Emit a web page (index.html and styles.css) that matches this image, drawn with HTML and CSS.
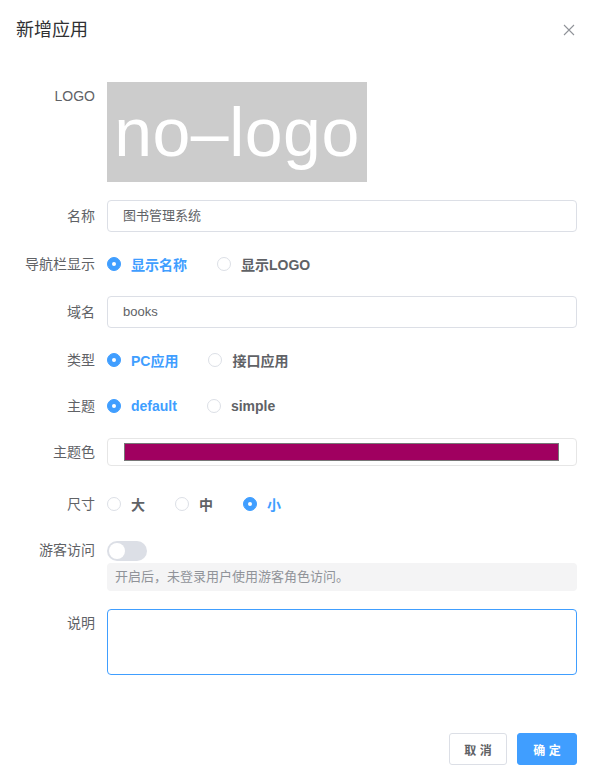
FILE: index.html
```html
<!DOCTYPE html>
<html lang="zh">
<head>
<meta charset="utf-8">
<link rel="stylesheet" href="styles.css">
</head>
<body>
<div class="dialog">
  <div class="header">
    <span class="title">新增应用</span>
    <svg class="close" width="12" height="12" viewBox="0 0 12 12"><path d="M1 1L11 11M11 1L1 11" stroke="#909399" stroke-width="1.1" fill="none"/></svg>
  </div>
  <div class="form">
    <div class="row">
      <div class="label lh28">LOGO</div>
      <div class="content"><div class="logo">no–logo</div></div>
    </div>
    <div class="row">
      <div class="label lh32">名称</div>
      <div class="content"><div class="input">图书管理系统</div></div>
    </div>
    <div class="row">
      <div class="label lh28">导航栏显示</div>
      <div class="content radios">
        <span class="radio checked"><i></i>显示名称</span>
        <span class="radio"><i></i>显示LOGO</span>
      </div>
    </div>
    <div class="row">
      <div class="label lh32">域名</div>
      <div class="content"><div class="input">books</div></div>
    </div>
    <div class="row">
      <div class="label lh28">类型</div>
      <div class="content radios">
        <span class="radio checked"><i></i>PC应用</span>
        <span class="radio"><i></i>接口应用</span>
      </div>
    </div>
    <div class="row">
      <div class="label lh28">主题</div>
      <div class="content radios">
        <span class="radio checked"><i></i>default</span>
        <span class="radio"><i></i>simple</span>
      </div>
    </div>
    <div class="row mb24">
      <div class="label lh28">主题色</div>
      <div class="content"><div class="picker"><div class="swatch"></div></div></div>
    </div>
    <div class="row">
      <div class="label lh28">尺寸</div>
      <div class="content radios">
        <span class="radio"><i></i>大</span>
        <span class="radio"><i></i>中</span>
        <span class="radio checked"><i></i>小</span>
      </div>
    </div>
    <div class="row">
      <div class="label lh28">游客访问</div>
      <div class="content">
        <div class="switch-wrap"><span class="switch"><span class="knob"></span></span></div>
        <div class="hint">开启后，未登录用户使用游客角色访问。</div>
      </div>
    </div>
    <div class="row">
      <div class="label lh28">说明</div>
      <div class="content"><div class="textarea"></div></div>
    </div>
  </div>
  <div class="footer">
    <button class="btn">取 消</button>
    <button class="btn primary">确 定</button>
  </div>
</div>
</body>
</html>
```
FILE: styles.css
```css
html, body {
  margin: 0;
  padding: 0;
  background: #fff;
}
body {
  font-family: "Liberation Sans", "Noto Sans CJK SC", sans-serif;
  color: #606266;
}
.dialog {
  width: 594px;
}
.header {
  display: flex;
  justify-content: space-between;
  align-items: center;
  padding: 18px 19px 0 16px;
  height: 24px;
}
.title {
  font-size: 18px;
  line-height: 24px;
  color: #303133;
}
.close {
  display: block;
}
.form {
  padding: 40px 17px 0 0;
}
.row {
  display: flex;
  margin-bottom: 18px;
}
.row.mb24 {
  margin-bottom: 24px;
}
.label {
  width: 107px;
  box-sizing: border-box;
  padding-right: 12px;
  text-align: right;
  font-size: 14px;
  color: #606266;
  flex-shrink: 0;
}
.lh28 { line-height: 28px; }
.lh32 { line-height: 32px; }
.content {
  flex: 1;
  min-width: 0;
}
.logo {
  width: 260px;
  height: 100px;
  background: #cccccc;
  color: #fff;
  font-family: "Liberation Sans", sans-serif;
  font-size: 68px;
  display: flex;
  align-items: center;
  justify-content: center;
  letter-spacing: 0.5px;
}
.input {
  height: 32px;
  box-sizing: border-box;
  border: 1px solid #dcdfe6;
  border-radius: 4px;
  padding: 0 15px;
  font-size: 13px;
  line-height: 30px;
  color: #606266;
}
.radios {
  display: flex;
  align-items: center;
  height: 28px;
}
.radio {
  display: inline-flex;
  align-items: center;
  margin-right: 30px;
  font-size: 14px;
  font-weight: 600;
  color: #606266;
}
.radio i {
  width: 14px;
  height: 14px;
  box-sizing: border-box;
  border: 1px solid #dcdfe6;
  border-radius: 50%;
  margin-right: 10px;
  position: relative;
  background: #fff;
}
.radio.checked {
  color: #409eff;
}
.radio.checked i {
  border-color: #409eff;
  background: #409eff;
}
.radio.checked i::after {
  content: "";
  position: absolute;
  width: 4px;
  height: 4px;
  border-radius: 50%;
  background: #fff;
  left: 4px;
  top: 4px;
}
.picker {
  height: 28px;
  box-sizing: border-box;
  border: 1px solid #e6e6e6;
  border-radius: 4px;
  padding: 4px 17px 4px 16px;
}
.swatch {
  height: 18px;
  box-sizing: border-box;
  border: 1px solid #777;
  background: #a00060;
}
.switch-wrap {
  height: 25px;
}
.switch {
  display: block;
  position: relative;
  top: 5px;
  width: 40px;
  height: 20px;
  border-radius: 10px;
  background: #dcdfe6;
}
.knob {
  position: absolute;
  left: 2px;
  top: 2px;
  width: 16px;
  height: 16px;
  border-radius: 50%;
  background: #fff;
}
.hint {
  margin-top: 2px;
  height: 28px;
  line-height: 28px;
  background: #f4f4f5;
  border-radius: 4px;
  padding-left: 8px;
  font-size: 13px;
  color: #909399;
}
.textarea {
  height: 66px;
  box-sizing: border-box;
  border: 1px solid #409eff;
  border-radius: 4px;
}
.footer {
  display: flex;
  justify-content: flex-end;
  gap: 10px;
  padding: 40px 17px 0 0;
}
.btn {
  height: 32px;
  width: 58px;
  box-sizing: border-box;
  border: 1px solid #dcdfe6;
  border-radius: 3px;
  background: #fff;
  color: #606266;
  font-family: "Liberation Sans", "Noto Sans CJK SC", sans-serif;
  font-size: 12px;
  font-weight: 700;
  padding: 0;
  cursor: pointer;
}
.btn.primary {
  width: 60px;
  background: #409eff;
  border-color: #409eff;
  color: #fff;
}
```
